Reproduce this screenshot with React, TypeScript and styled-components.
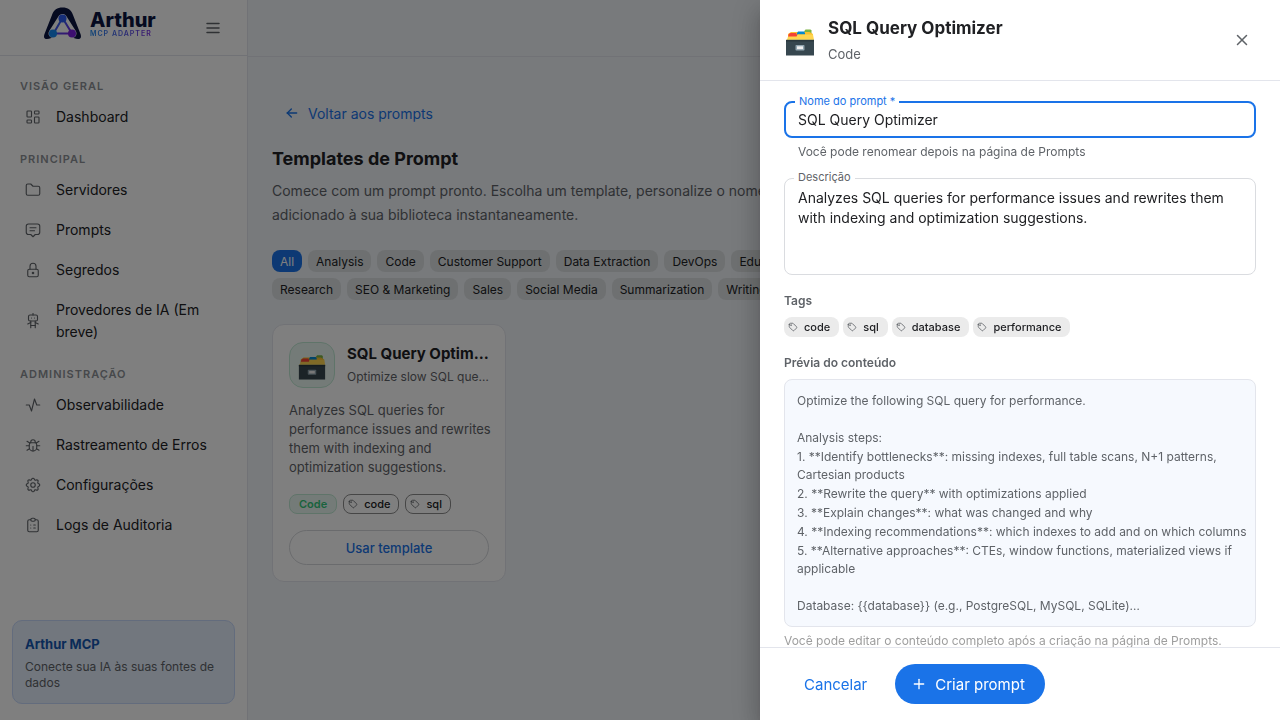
import React from "react";
import styled, { createGlobalStyle, css } from "styled-components";
import {
  TbActivity,
  TbArrowLeft,
  TbBug,
  TbClipboardList,
  TbFolder,
  TbLayoutDashboard,
  TbLock,
  TbMenu2,
  TbMessage2,
  TbPlus,
  TbRobot,
  TbSettings,
  TbTag,
  TbX,
} from "react-icons/tb";

const color = {
  primary: "#1a73e8",
  primaryDark: "#1557b0",
  ink: "#202124",
  muted: "#5f6368",
  faint: "#9e9e9e",
  line: "#e3e5ec",
  page: "#f0f4f9",
  success: "#34c77b",
};

const GlobalStyle = createGlobalStyle`
  *, *::before, *::after { box-sizing: border-box; }
  body {
    margin: 0;
    background: ${color.page};
    color: ${color.ink};
    font-family: Inter, "Liberation Sans", sans-serif;
    font-size: 14px;
  }
  h1, h2, h3, p, ul { margin: 0; padding: 0; }
  ul { list-style: none; }
  button, input, textarea { font-family: inherit; }
  button { cursor: pointer; }
  svg { flex-shrink: 0; }
`;

const Shell = styled.div`
  display: flex;
  min-height: 100vh;
`;

/* ---------- Sidebar ---------- */

const Sidebar = styled.aside`
  display: flex;
  flex-direction: column;
  flex: 0 0 248px;
  height: 100vh;
  background: #fff;
  border-right: 1px solid ${color.line};
`;

const SidebarHeader = styled.div`
  display: flex;
  align-items: center;
  justify-content: space-between;
  height: 56px;
  padding: 0 25px 0 43px;
  border-bottom: 1px solid ${color.line};
`;

const Brand = styled.div`
  display: flex;
  align-items: center;
  gap: 7px;
  padding-bottom: 8px;
`;

const BrandName = styled.div`
  color: #0b1440;
  font-size: 20px;
  font-weight: 800;
  line-height: 20px;
`;

const BrandTag = styled.div`
  width: max-content;
  background: linear-gradient(90deg, #1d8bf0, #7a2be0);
  background-clip: text;
  color: transparent;
  font-size: 7px;
  font-weight: 600;
  letter-spacing: 1px;
  line-height: 8px;
`;

const IconButton = styled.button`
  display: flex;
  padding: 0;
  border: 0;
  background: none;
  color: ${color.muted};
`;

const Nav = styled.nav`
  flex: 1;
  padding-top: 8px;
`;

const NavHeading = styled.h3`
  margin: 14px 0 3px;
  padding-left: 20px;
  color: #8d9196;
  font-size: 11px;
  font-weight: 600;
  letter-spacing: 1px;
  line-height: 16px;
`;

const NavLink = styled.a`
  display: flex;
  align-items: center;
  gap: 14px;
  padding: 9px 24px;
  color: ${color.ink};
  font-size: 14px;
  line-height: 22px;
  text-decoration: none;

  svg { color: ${color.muted}; }
`;

const Promo = styled.section`
  margin: 0 12px 16px;
  padding: 12px;
  border: 1px solid #c6d8fb;
  border-radius: 10px;
  background: #e4eefc;
`;

const PromoTitle = styled.p`
  margin-bottom: 4px;
  color: ${color.primaryDark};
  font-size: 13px;
  font-weight: 700;
  line-height: 22px;
`;

const PromoText = styled.p`
  color: ${color.muted};
  font-size: 12px;
  line-height: 16px;
`;

/* ---------- Main ---------- */

const Main = styled.main`
  flex: 1;
  min-width: 0;
`;

const TopBar = styled.header`
  height: 57px;
  border-bottom: 1px solid ${color.line};
`;

const Content = styled.div`
  padding: 36px 24px 24px;
`;

const BackButton = styled.button`
  display: flex;
  align-items: center;
  gap: 8px;
  height: 40px;
  margin-bottom: 14px;
  padding: 0 12px;
  border: 0;
  background: none;
  color: ${color.primary};
  font-size: 14px;
`;

const PageTitle = styled.h1`
  font-size: 18px;
  font-weight: 700;
  line-height: 24px;
`;

const Lead = styled.p`
  max-width: 600px;
  margin: 8px 0 23px;
  color: ${color.muted};
  font-size: 14px;
  line-height: 24px;
`;

const Filters = styled.div`
  display: flex;
  flex-wrap: wrap;
  gap: 6px;
  max-width: 600px;
  margin-bottom: 24px;
`;

const Filter = styled.button<{ $active?: boolean }>`
  height: 22px;
  padding: 0 8px;
  border: 0;
  border-radius: 8px;
  background: ${(p) => (p.$active ? color.primary : "#dde1e2")};
  color: ${(p) => (p.$active ? "#fff" : color.ink)};
  font-size: 12px;
  font-weight: 400;
`;

const Grid = styled.div`
  display: grid;
  grid-template-columns: repeat(4, minmax(0, 1fr));
  gap: 16px;
`;

const Card = styled.article`
  padding: 17px 16px 16px;
  border: 1px solid ${color.line};
  border-radius: 12px;
  background: #fff;
`;

const CardHead = styled.div`
  display: flex;
  align-items: center;
  gap: 12px;
`;

const CardIcon = styled.div`
  display: flex;
  align-items: center;
  justify-content: center;
  flex: 0 0 46px;
  height: 46px;
  border: 1px solid #bfe8d3;
  border-radius: 14px;
  background: #e9f6f0;
`;

const CardTitles = styled.div`
  min-width: 0;
`;

const ellipsis = css`
  overflow: hidden;
  text-overflow: ellipsis;
  white-space: nowrap;
`;

const CardTitle = styled.h2`
  ${ellipsis}
  font-size: 15px;
  font-weight: 700;
  line-height: 24px;
`;

const CardSubtitle = styled.p`
  ${ellipsis}
  color: ${color.muted};
  font-size: 12px;
  line-height: 22px;
`;

const CardText = styled.p`
  margin: 13px -4px 17px 0;
  color: ${color.muted};
  font-size: 13px;
  line-height: 19px;
`;

const TagRow = styled.div<{ $gap: number }>`
  display: flex;
  flex-wrap: wrap;
  gap: ${(p) => p.$gap}px;
`;

const tagTones = {
  filled: css`
    padding: 0 9px 0 4px;
    background: #ebebeb;
  `,
  outlined: css`
    padding: 0 8px 0 4px;
    border: 1px solid #8d8d8d;
  `,
  category: css`
    padding: 0 9px;
    border: 1px solid #bfe8d3;
    background: #e9f6f0;
    color: ${color.success};
    font-weight: 600;
  `,
};

const Tag = styled.span<{ $tone: keyof typeof tagTones }>`
  display: inline-flex;
  align-items: center;
  gap: 6px;
  height: 20px;
  border-radius: 8px;
  font-size: 11px;
  font-weight: 500;
  ${(p) => tagTones[p.$tone]}

  svg { color: ${color.muted}; }
`;

const UseButton = styled.button`
  width: 100%;
  height: 35px;
  margin-top: 16px;
  border: 1px solid #d5d7db;
  border-radius: 18px;
  background: none;
  color: ${color.primary};
  font-size: 13px;
  font-weight: 500;
`;

/* ---------- Drawer ---------- */

const Backdrop = styled.div`
  position: fixed;
  inset: 0;
  display: flex;
  justify-content: flex-end;
  background: rgba(0, 0, 0, 0.5);
`;

const Drawer = styled.div`
  display: flex;
  flex-direction: column;
  width: 520px;
  max-width: 100%;
  background: #fff;
  box-shadow: 0 8px 10px -5px rgba(0, 0, 0, 0.2),
    0 16px 24px 2px rgba(0, 0, 0, 0.14), 0 6px 30px 5px rgba(0, 0, 0, 0.12);
`;

const DrawerHeader = styled.header`
  display: flex;
  align-items: center;
  gap: 12px;
  height: 81px;
  padding: 0 29px 0 24px;
  border-bottom: 1px solid ${color.line};
`;

const DrawerTitles = styled.div`
  flex: 1;
`;

const DrawerTitle = styled.h2`
  font-size: 17px;
  font-weight: 700;
  line-height: 28px;
`;

const DrawerSubtitle = styled.p`
  color: ${color.muted};
  font-size: 13px;
  line-height: 24px;
`;

const DrawerBody = styled.div`
  flex: 1;
  overflow-y: auto;
  padding: 20px 24px;
  scrollbar-width: none;
`;

const Field = styled.div<{ $focused?: boolean }>`
  position: relative;
  display: flex;
  padding: ${(p) => (p.$focused ? "7px 12px 6px" : "9px 13px")};
  border: ${(p) => (p.$focused ? `2px solid ${color.primary}` : "1px solid #dadce0")};
  border-radius: 8px;

  label {
    position: absolute;
    top: -9px;
    left: 9px;
    padding: 0 4px;
    background: #fff;
    color: ${(p) => (p.$focused ? color.primary : color.muted)};
    font-size: 11px;
    line-height: 14px;
  }
`;

const control = css`
  width: 100%;
  padding: 0;
  border: 0;
  outline: 0;
  background: none;
  color: ${color.ink};
  font-size: 14px;
  line-height: 20px;
`;

const TextInput = styled.input`
  ${control}
  height: 20px;
`;

const TextArea = styled.textarea`
  ${control}
  display: block;
  height: 77px;
  resize: none;
`;

const Helper = styled.p`
  margin: 4px 14px 16px;
  color: ${color.muted};
  font-size: 12px;
  line-height: 20px;
`;

const GroupLabel = styled.h3`
  margin: 16px 0 6px;
  color: ${color.muted};
  font-size: 12px;
  font-weight: 600;
  line-height: 20px;
`;

const Preview = styled.div`
  padding: 11px 4px 11px 12px;
  border: 1px solid ${color.line};
  border-radius: 8px;
  background: #f6f9fe;
  color: ${color.muted};
  font-size: 12px;
`;

const PreviewLine = styled.p<{ $spaced?: boolean }>`
  margin-top: ${(p) => (p.$spaced ? 19 : 1)}px;
  line-height: 18px;
`;

const Note = styled.p`
  margin-top: 4px;
  color: ${color.faint};
  font-size: 12px;
  line-height: 20px;
`;

const DrawerFooter = styled.footer`
  display: flex;
  gap: 8px;
  padding: 16px 24px;
  border-top: 1px solid ${color.line};
`;

const Action = styled.button<{ $filled?: boolean }>`
  display: flex;
  align-items: center;
  gap: 8px;
  height: 40px;
  padding: ${(p) => (p.$filled ? "0 20px 0 16px" : "0 20px")};
  border: 0;
  border-radius: 20px;
  background: ${(p) => (p.$filled ? color.primary : "none")};
  color: ${(p) => (p.$filled ? "#fff" : color.primary)};
  font-size: 15px;
  font-weight: 400;
`;

/* ---------- Drawings ---------- */

const LogoMark = () => (
  <svg width="40" height="33" viewBox="0 0 40 33" aria-hidden="true">
    <defs>
      <linearGradient id="links" x1="0" y1="0" x2="1" y2="1">
        <stop offset="0" stopColor="#1a7cf5" />
        <stop offset="1" stopColor="#7a1fe0" />
      </linearGradient>
    </defs>
    <path
      d="M4 32C1 32 .5 30 1.500 27L9 8C11 2.500 14 .5 19.500 .5S28 2.500 30 8L37.500 27C38.500 30 38 32 35 32C32 32 31 30.500 28 30.500H11C8 30.500 7 32 4 32Z"
      fill="#0b1440"
    />
    <path d="M19.500 11.500L10 26.500H29Z" fill="#fff" stroke="#fff" strokeWidth="9" strokeLinejoin="round" />
    <path d="M19.500 11L10.500 26.500H29Z" fill="none" stroke="url(#links)" strokeWidth="2" />
    <circle cx="19.500" cy="11.500" r="4" fill="#2c5cf2" />
    <circle cx="10" cy="26.500" r="4" fill="#1488f0" />
    <circle cx="29" cy="26.500" r="4" fill="#7a1fe0" />
  </svg>
);

const CardFileBox = ({ size }: { size: number }) => (
  <svg width={size} height={size} viewBox="0 0 32 32" aria-hidden="true">
    <path d="M20 7.500L21.500 5.500h5l1 1v5h-7.500z" fill="#7cb342" />
    <path d="M4 10L7 8h18.500L29 10v6H4z" fill="#fbc02d" />
    <path d="M13 9L14 7.500h6L21 9v1.500h-8z" fill="#0288d1" />
    <path d="M4 13l.8-3 1.700-1h5.500l1 1.500v2.500H4z" fill="#f44336" />
    <path d="M3 16l1-3.500h8.500L14 10.500h15L30 16z" fill="#ffd54f" />
    <path d="M2.500 15h27.500V17h-27.500z" fill="#c9b75e" />
    <path d="M2 16h28v15.500H2z" fill="#37474f" />
    <path d="M2 16h28v1.500H2z" fill="#2b383e" />
    <rect x="11.500" y="21" width="9" height="5.500" rx=".8" fill="#90a4ae" />
    <rect x="13" y="22.300" width="6" height="2.800" fill="#f0f0f0" />
  </svg>
);

/* ---------- Data ---------- */

const sections = [
  { heading: "VISÃO GERAL", items: [{ label: "Dashboard", Icon: TbLayoutDashboard }] },
  {
    heading: "PRINCIPAL",
    items: [
      { label: "Servidores", Icon: TbFolder },
      { label: "Prompts", Icon: TbMessage2 },
      { label: "Segredos", Icon: TbLock },
      { label: "Provedores de IA (Em breve)", Icon: TbRobot },
    ],
  },
  {
    heading: "ADMINISTRAÇÃO",
    items: [
      { label: "Observabilidade", Icon: TbActivity },
      { label: "Rastreamento de Erros", Icon: TbBug },
      { label: "Configurações", Icon: TbSettings },
      { label: "Logs de Auditoria", Icon: TbClipboardList },
    ],
  },
];

const filters = [
  "All",
  "Analysis",
  "Code",
  "Customer Support",
  "Data Extraction",
  "DevOps",
  "Education",
  "Research",
  "SEO & Marketing",
  "Sales",
  "Social Media",
  "Summarization",
  "Writing",
];

const description =
  "Analyzes SQL queries for performance issues and rewrites them with indexing and optimization suggestions.";

const preview = [
  { text: "Optimize the following SQL query for performance." },
  { text: "Analysis steps:", spaced: true },
  { text: "1. **Identify bottlenecks**: missing indexes, full table scans, N+1 patterns, Cartesian products" },
  { text: "2. **Rewrite the query** with optimizations applied" },
  { text: "3. **Explain changes**: what was changed and why" },
  { text: "4. **Indexing recommendations**: which indexes to add and on which columns" },
  { text: "5. **Alternative approaches**: CTEs, window functions, materialized views if applicable" },
  { text: "Database: {{database}} (e.g., PostgreSQL, MySQL, SQLite)…", spaced: true },
];

export default function App() {
  return (
    <>
      <GlobalStyle />
      <Shell>
        <Sidebar>
          <SidebarHeader>
            <Brand>
              <LogoMark />
              <div>
                <BrandName>Arthur</BrandName>
                <BrandTag>MCP ADAPTER</BrandTag>
              </div>
            </Brand>
            <IconButton aria-label="Menu">
              <TbMenu2 size={18} strokeWidth={2} />
            </IconButton>
          </SidebarHeader>
          <Nav>
            {sections.map(({ heading, items }) => (
              <div key={heading}>
                <NavHeading>{heading}</NavHeading>
                <ul>
                  {items.map(({ label, Icon }) => (
                    <li key={label}>
                      <NavLink href="#">
                        <Icon size={18} strokeWidth={1.5} />
                        {label}
                      </NavLink>
                    </li>
                  ))}
                </ul>
              </div>
            ))}
          </Nav>
          <Promo>
            <PromoTitle>Arthur MCP</PromoTitle>
            <PromoText>Conecte sua IA às suas fontes de dados</PromoText>
          </Promo>
        </Sidebar>

        <Main>
          <TopBar />
          <Content>
            <BackButton>
              <TbArrowLeft size={16} />
              Voltar aos prompts
            </BackButton>
            <PageTitle>Templates de Prompt</PageTitle>
            <Lead>
              Comece com um prompt pronto. Escolha um template, personalize o nome e ele será
              adicionado à sua biblioteca instantaneamente.
            </Lead>
            <Filters>
              {filters.map((name, i) => (
                <Filter key={name} $active={i === 0}>
                  {name}
                </Filter>
              ))}
            </Filters>
            <Grid>
              <Card>
                <CardHead>
                  <CardIcon>
                    <CardFileBox size={30} />
                  </CardIcon>
                  <CardTitles>
                    <CardTitle>SQL Query Optimizer</CardTitle>
                    <CardSubtitle>Optimize slow SQL queries</CardSubtitle>
                  </CardTitles>
                </CardHead>
                <CardText>{description}</CardText>
                <TagRow $gap={6}>
                  <Tag $tone="category">Code</Tag>
                  {["code", "sql"].map((tag) => (
                    <Tag key={tag} $tone="outlined">
                      <TbTag size={10} strokeWidth={2} />
                      {tag}
                    </Tag>
                  ))}
                </TagRow>
                <UseButton>Usar template</UseButton>
              </Card>
            </Grid>
          </Content>
        </Main>
      </Shell>

      <Backdrop>
        <Drawer role="dialog" aria-modal="true" aria-labelledby="drawer-title">
          <DrawerHeader>
            <CardFileBox size={32} />
            <DrawerTitles>
              <DrawerTitle id="drawer-title">SQL Query Optimizer</DrawerTitle>
              <DrawerSubtitle>Code</DrawerSubtitle>
            </DrawerTitles>
            <IconButton aria-label="Fechar">
              <TbX size={18} strokeWidth={2} />
            </IconButton>
          </DrawerHeader>
          <DrawerBody>
            <Field $focused>
              <label htmlFor="prompt-name">Nome do prompt *</label>
              <TextInput id="prompt-name" defaultValue="SQL Query Optimizer" />
            </Field>
            <Helper>Você pode renomear depois na página de Prompts</Helper>
            <Field>
              <label htmlFor="prompt-description">Descrição</label>
              <TextArea id="prompt-description" defaultValue={description} />
            </Field>
            <GroupLabel>Tags</GroupLabel>
            <TagRow $gap={4}>
              {["code", "sql", "database", "performance"].map((tag) => (
                <Tag key={tag} $tone="filled">
                  <TbTag size={10} strokeWidth={2} />
                  {tag}
                </Tag>
              ))}
            </TagRow>
            <GroupLabel>Prévia do conteúdo</GroupLabel>
            <Preview>
              {preview.map(({ text, spaced }) => (
                <PreviewLine key={text} $spaced={spaced}>
                  {text}
                </PreviewLine>
              ))}
            </Preview>
            <Note>Você pode editar o conteúdo completo após a criação na página de Prompts.</Note>
          </DrawerBody>
          <DrawerFooter>
            <Action>Cancelar</Action>
            <Action $filled>
              <TbPlus size={16} />
              Criar prompt
            </Action>
          </DrawerFooter>
        </Drawer>
      </Backdrop>
    </>
  );
}
